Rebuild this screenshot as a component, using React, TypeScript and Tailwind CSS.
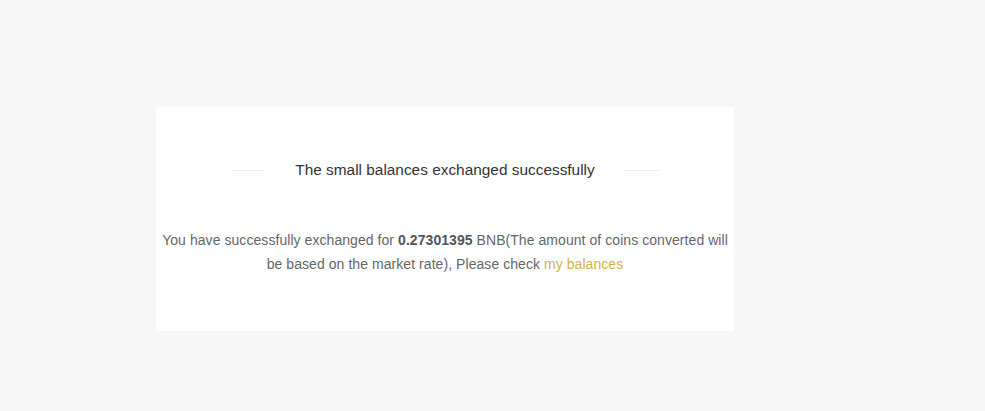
export default function App() {
  return (
    <div className="min-h-[411px] w-full bg-[#f7f7f7] pt-[107px] pl-[156px]" style={{ fontFamily: '"Liberation Sans", Arial, sans-serif' }}>
      <div className="w-[578px] h-[224px] bg-white px-[4px] pt-[51px]">
        <div className="flex items-center justify-center gap-[30px]">
          <div className="w-[34px] h-px bg-[#ebebeb]" />
          <div className="text-[15.4px] leading-[24px] text-[#333]">The small balances exchanged successfully</div>
          <div className="w-[34px] h-px bg-[#ebebeb]" />
        </div>
        <p className="mt-[46px] text-center text-[14px] leading-[24px] tracking-[0.06px] text-[#666]">
          You have successfully exchanged for <b className="font-bold text-[#555]">0.27301395</b> BNB(The amount of coins converted will be based on the market rate), Please check <a className="text-[#d4b14f]">my balances</a>
        </p>
      </div>
    </div>
  );
}
